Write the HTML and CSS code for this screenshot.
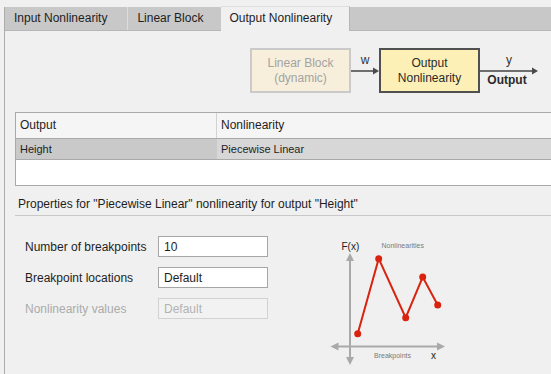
FILE: index.html
```html
<!DOCTYPE html>
<html lang="en">
<head>
    <meta charset="UTF-8">
    <meta name="viewport" content="width=device-width, initial-scale=1.0">
    <title>Output Nonlinearity</title>
    <link rel="stylesheet" href="styles.css">
</head>
<body>

    <div class="window">
        <div class="tabs">
            <div class="tab first">Input Nonlinearity</div>
            <div class="tab second">Linear Block</div>
            <div class="tab active">Output Nonlinearity</div>
        </div>

        <div class="pane">
            <div class="diagram">
                <div class="block dim">Linear Block<br>(dynamic)</div>
                <div class="link">
                    <span class="link-label">w</span>
                    <svg width="28" height="8" viewBox="0 0 28 8">
                        <line x1="0" y1="4" x2="23" y2="4" stroke="#6e6e6e" stroke-width="2"/>
                        <polygon points="22,0.5 28,4 22,7.5" fill="#4a4a4a"/>
                    </svg>
                </div>
                <div class="block active">Output<br>Nonlinearity</div>
                <div class="link out">
                    <span class="link-label">y</span>
                    <svg width="58" height="8" viewBox="0 0 58 8">
                        <line x1="0" y1="4" x2="53" y2="4" stroke="#6e6e6e" stroke-width="2"/>
                        <polygon points="52,0.5 58,4 52,7.5" fill="#4a4a4a"/>
                    </svg>
                    <span class="link-name">Output</span>
                </div>
            </div>

            <div class="grid">
                <div class="grid-head">
                    <div class="cell col-name">Output</div>
                    <div class="cell">Nonlinearity</div>
                </div>
                <div class="grid-row selected">
                    <div class="cell col-name">Height</div>
                    <div class="cell">Piecewise Linear</div>
                </div>
                <div class="grid-empty"></div>
            </div>

            <div class="section-title">Properties for "Piecewise Linear" nonlinearity for output "Height"</div>

            <div class="props">
                <div class="fields">
                    <div class="field">
                        <label for="nbp">Number of breakpoints</label>
                        <input id="nbp" type="text" value="10">
                    </div>
                    <div class="field">
                        <label for="bpl">Breakpoint locations</label>
                        <input id="bpl" type="text" value="Default">
                    </div>
                    <div class="field disabled">
                        <label for="nlv">Nonlinearity values</label>
                        <input id="nlv" type="text" value="Default" disabled>
                    </div>
                </div>

                <svg class="plot" width="140" height="140" viewBox="0 0 140 140">
                    <!-- axes -->
                    <line x1="30" y1="26" x2="30" y2="128" stroke="#a9a9a9" stroke-width="2"/>
                    <polygon points="30,21 26,29 34,29" fill="#a9a9a9"/>
                    <polygon points="30,133 26,125 34,125" fill="#a9a9a9"/>
                    <line x1="15" y1="114.5" x2="120" y2="114.5" stroke="#a9a9a9" stroke-width="2"/>
                    <polygon points="10.5,114.5 18.5,110.5 18.5,118.5" fill="#a9a9a9"/>
                    <polygon points="125,114.5 117,110.5 117,118.5" fill="#a9a9a9"/>

                    <text x="21.5" y="17.5" class="axis-name">F(x)</text>
                    <text x="61.5" y="16" class="axis-note">Nonlinearities</text>
                    <text x="54" y="125.5" class="axis-note">Breakpoints</text>
                    <text x="111" y="126.5" class="axis-name">x</text>

                    <!-- piecewise curve -->
                    <polyline points="37.7,101.7 58.7,26.7 85.7,85.7 102.7,45 117.7,73" fill="none" stroke="#d9230f" stroke-width="2"/>
                    <circle cx="37.7" cy="101.7" r="3.5" fill="#d9230f"/>
                    <circle cx="58.7" cy="26.7" r="3.5" fill="#d9230f"/>
                    <circle cx="85.7" cy="85.7" r="3.5" fill="#d9230f"/>
                    <circle cx="102.7" cy="45" r="3.5" fill="#d9230f"/>
                    <circle cx="117.7" cy="73" r="3.5" fill="#d9230f"/>
                </svg>
            </div>
        </div>
    </div>

</body>
</html>
```

FILE: styles.css
```css
html, body {
    height: 100%;
    overflow: hidden;
}

body {
    margin: 0;
    background-color: #f0f0f0;
    font-family: "Liberation Sans", Arial, sans-serif;
    font-size: 12px;
    color: #1e1e1e;
}

.window {
    margin: 7px 0 0 4px;
    height: calc(100% - 7px);
    border-left: 1px solid #acacac;
}

/* tab strip */
.tabs {
    display: flex;
    height: 23px;
    background-color: #c8c8c8;
    border-bottom: 1px solid #b6b6b6;
}

.tab {
    line-height: 23px;
    padding: 0 20px 0 9px;
    white-space: nowrap;
}

.tab.first {
    border-right: 1px solid #dcdcdc;
}

.tab.second {
    padding-right: 18px;
}

.tab.active {
    background-color: #f0f0f0;
    height: 24px;
    padding: 0 17px 0 8px;
    border-top: 1px solid #dedede;
    margin-top: -1px;
    border-right: 1px solid #b6b6b6;
}

/* block diagram */
.diagram {
    display: flex;
    margin: 17px 0 0 245px;
}

.block {
    width: 101px;
    height: 45px;
    box-sizing: border-box;
    display: flex;
    align-items: center;
    justify-content: center;
    text-align: center;
    line-height: 15px;
}

.block.dim {
    background-color: #f7efdb;
    border: 2px solid #cacaca;
    color: #a3a3a3;
}

.block.active {
    background-color: #fdf0b6;
    border: 2px solid #505050;
    color: #2a2a2a;
}

.link {
    width: 28px;
    display: flex;
    flex-direction: column;
    align-items: center;
    padding-top: 5px;
}

.link.out {
    width: 58px;
}

.link-label {
    line-height: 14px;
    color: #333;
}

.link svg {
    display: block;
}

.link-name {
    font-weight: bold;
    line-height: 12px;
    margin: -1px 4px 0 0;
    color: #2a2a2a;
}

/* output table */
.grid {
    margin: 19px 0 0 10px;
    border: 1px solid #a9a9a9;
    border-right: none;
}

.grid-head,
.grid-row {
    display: flex;
    border-bottom: 1px solid #a9a9a9;
}

.grid-head {
    height: 25px;
    line-height: 25px;
    background-color: #f5f5f5;
}

.grid-row {
    height: 20px;
    line-height: 20px;
    font-size: 11px;
}

.cell {
    padding-left: 4px;
    flex: 1;
}

.cell.col-name {
    flex: none;
    width: 196px;
    border-right: 1px solid #d2d2d2;
}

.grid-row.selected .cell {
    background-color: #d7d7d7;
}

.grid-row.selected .cell.col-name {
    background-color: #c9c9c9;
    border-right-color: #c9c9c9;
}

.grid-empty {
    height: 25px;
    background-color: #fff;
}

.section-title {
    margin: 11px 0 0 10px;
    padding: 0 0 4px 3px;
    line-height: 14px;
    border-bottom: 1px solid #c8c8c8;
}

/* properties form */
.props {
    display: flex;
    padding: 20px 0 0 20px;
}

.fields {
    width: 243px;
}

.field {
    display: flex;
    align-items: center;
    height: 21px;
}

.field + .field {
    margin-top: 10px;
}

.field label {
    width: 133px;
}

.field input {
    width: 110px;
    height: 21px;
    box-sizing: border-box;
    margin: 0;
    padding: 0 0 0 5px;
    border: 1px solid #a6a6a6;
    border-radius: 0;
    background-color: #fff;
    font-family: inherit;
    font-size: 12px;
    color: #1e1e1e;
    outline: none;
}

.field.disabled label {
    color: #ababab;
}

.field.disabled input {
    background-color: #f2f2f2;
    border-color: #d2d2d2;
    color: #b3b3b3;
}

.plot {
    margin: -4px 0 0 52px;
    display: block;
}

.axis-name {
    font-family: "Liberation Sans", Arial, sans-serif;
    font-size: 10px;
    fill: #222;
}

.axis-note {
    font-family: "Liberation Sans", Arial, sans-serif;
    font-size: 7px;
    fill: #7a7a7a;
}
```
